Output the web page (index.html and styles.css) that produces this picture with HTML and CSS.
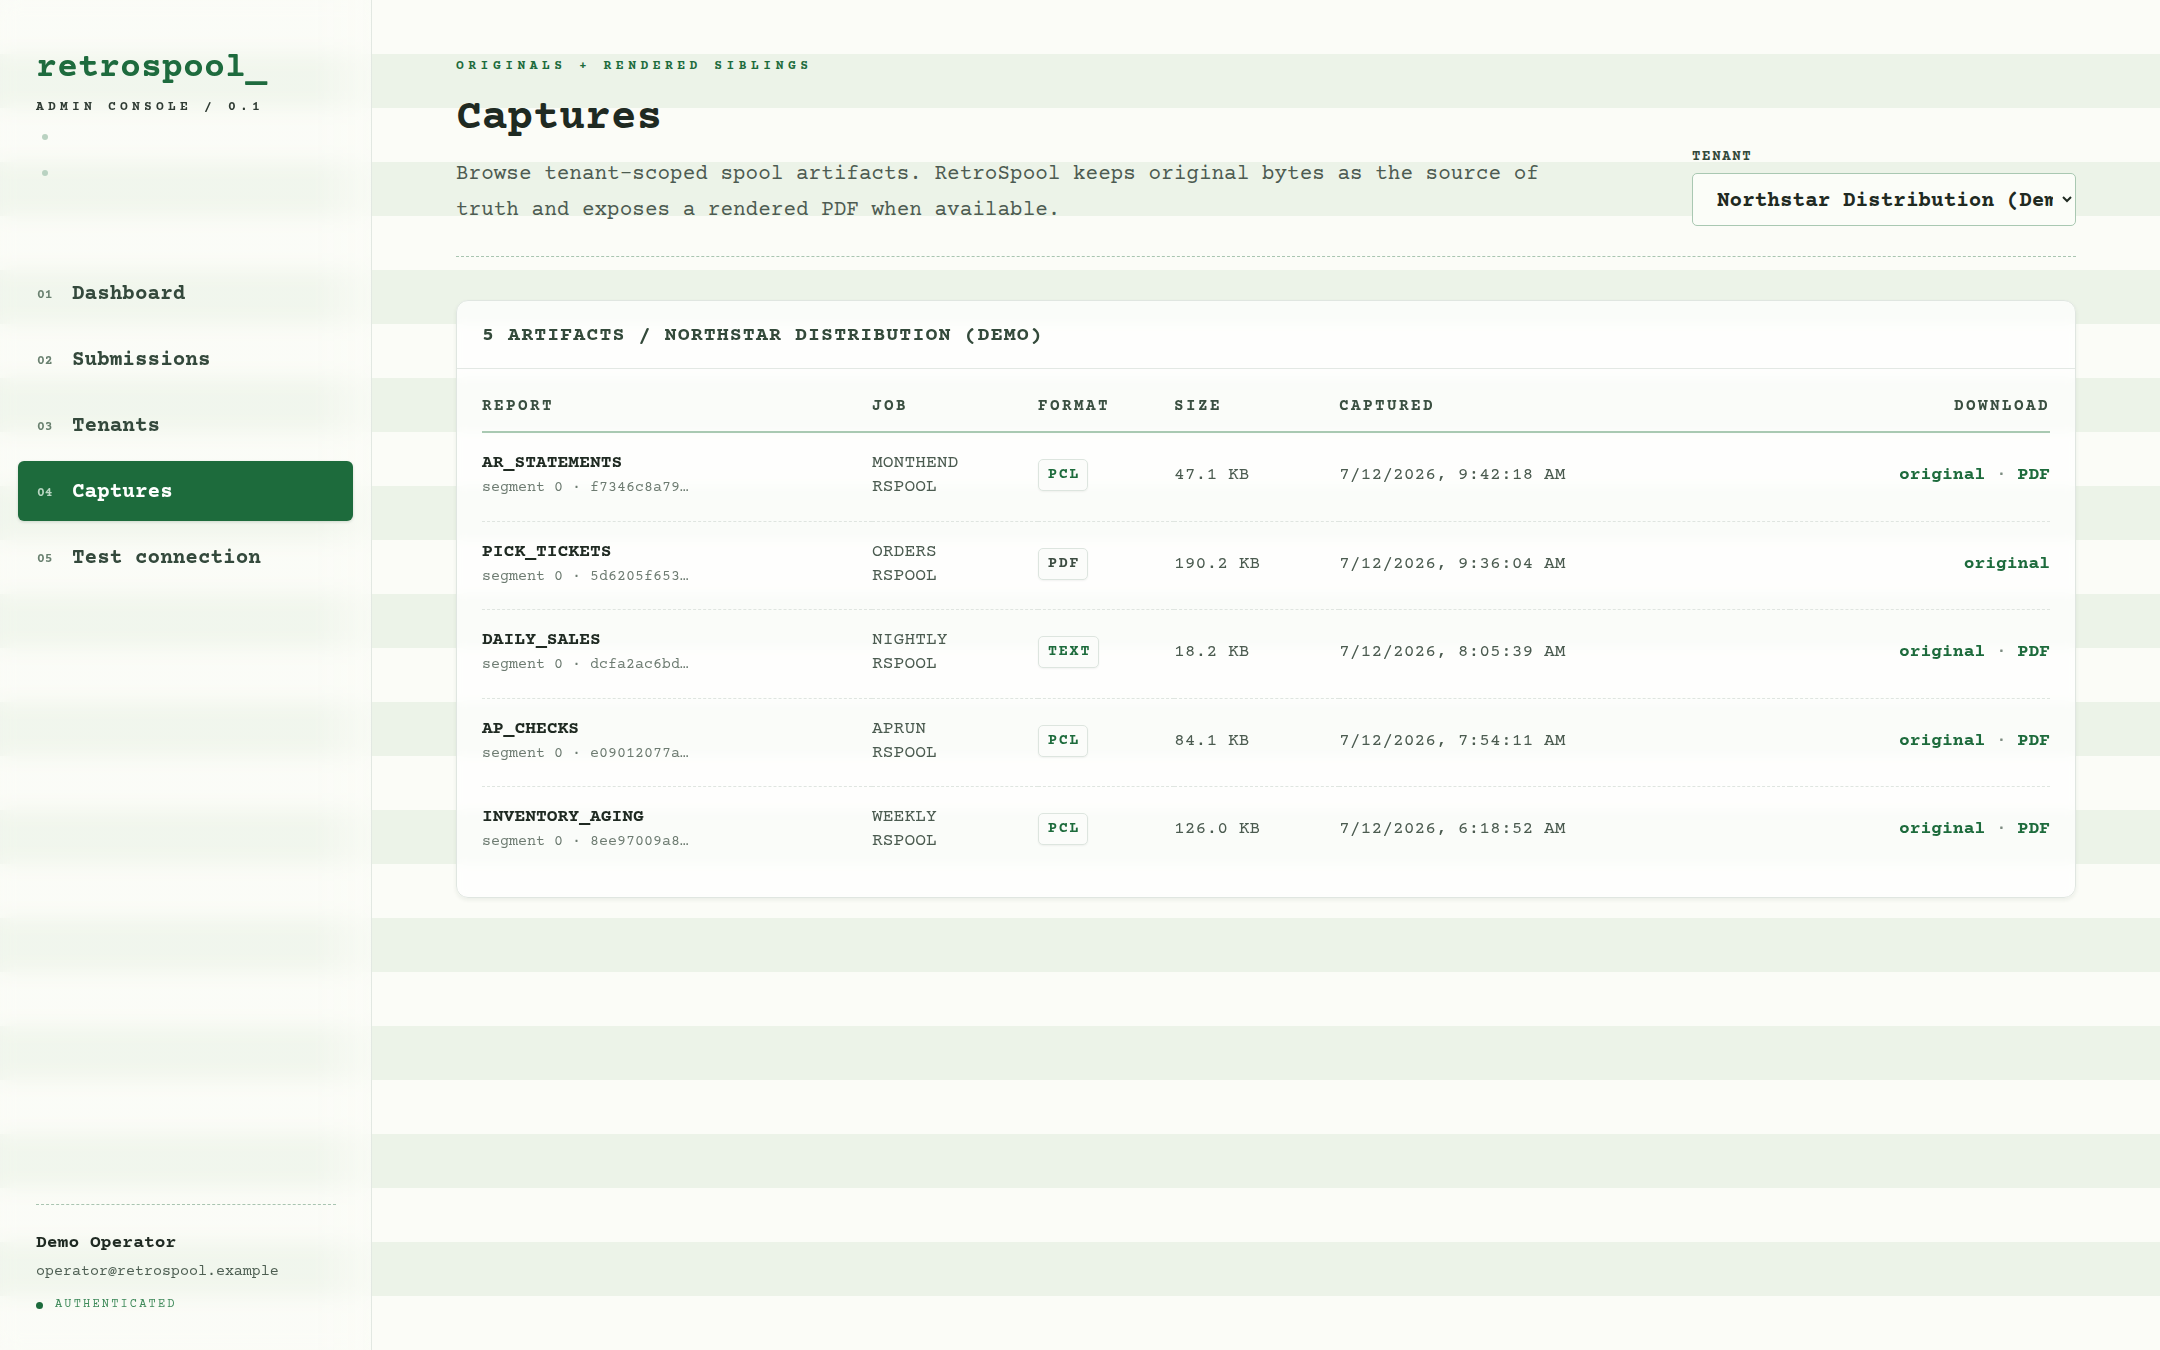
FILE: index.html
```html
<!DOCTYPE html>
<html lang="en">
<head>
  <meta charset="UTF-8">
  <meta name="viewport" content="width=device-width, initial-scale=1.0">
  <title>Captures · RetroSpool Admin</title>
  <link rel="stylesheet" href="styles.css">
</head>
<body>
  <div class="shell">
    <!-- Sidebar -->
    <aside class="sidebar">
      <div class="brand">
        <div class="logo">retrospool_</div>
        <div class="tagline">ADMIN CONSOLE / 0.1</div>
        <div class="blips"><span></span><span></span></div>
      </div>

      <nav class="nav">
        <a class="nav-item" href="#"><span class="nav-num">01</span><span class="nav-label">Dashboard</span></a>
        <a class="nav-item" href="#"><span class="nav-num">02</span><span class="nav-label">Submissions</span></a>
        <a class="nav-item" href="#"><span class="nav-num">03</span><span class="nav-label">Tenants</span></a>
        <a class="nav-item active" href="#"><span class="nav-num">04</span><span class="nav-label">Captures</span></a>
        <a class="nav-item" href="#"><span class="nav-num">05</span><span class="nav-label">Test connection</span></a>
      </nav>

      <div class="operator">
        <div class="operator-name">Demo Operator</div>
        <div class="operator-email">operator@retrospool.example</div>
        <div class="operator-status"><span class="status-dot"></span>AUTHENTICATED</div>
      </div>
    </aside>

    <!-- Main -->
    <main class="main">
      <header class="page-head">
        <div class="page-intro">
          <div class="eyebrow">ORIGINALS + RENDERED SIBLINGS</div>
          <h1>Captures</h1>
          <p>Browse tenant-scoped spool artifacts. RetroSpool keeps original bytes as the source of truth and exposes a rendered PDF when available.</p>
        </div>
        <label class="tenant-picker">
          <span class="field-label">TENANT</span>
          <select>
            <option>Northstar Distribution (Demo)</option>
            <option>Harbor Freight Lines</option>
          </select>
        </label>
      </header>

      <section class="card">
        <div class="card-head">5 ARTIFACTS / NORTHSTAR DISTRIBUTION (DEMO)</div>
        <div class="table-wrap">
          <table class="artifacts">
            <colgroup>
              <col class="col-report">
              <col class="col-job">
              <col class="col-format">
              <col class="col-size">
              <col>
              <col class="col-download">
            </colgroup>
            <thead>
              <tr>
                <th>REPORT</th>
                <th>JOB</th>
                <th>FORMAT</th>
                <th>SIZE</th>
                <th>CAPTURED</th>
                <th class="right">DOWNLOAD</th>
              </tr>
            </thead>
            <tbody>
              <tr>
                <td>
                  <div class="report-name">AR_STATEMENTS</div>
                  <div class="report-seg">segment 0 · f7346c8a79…</div>
                </td>
                <td class="job"><span>MONTHEND</span><span>RSPOOL</span></td>
                <td><span class="badge">PCL</span></td>
                <td>47.1 KB</td>
                <td>7/12/2026, 9:42:18 AM</td>
                <td class="right"><a href="#">original</a><span class="sep"> · </span><a href="#">PDF</a></td>
              </tr>
              <tr>
                <td>
                  <div class="report-name">PICK_TICKETS</div>
                  <div class="report-seg">segment 0 · 5d6205f653…</div>
                </td>
                <td class="job"><span>ORDERS</span><span>RSPOOL</span></td>
                <td><span class="badge plain">PDF</span></td>
                <td>190.2 KB</td>
                <td>7/12/2026, 9:36:04 AM</td>
                <td class="right"><a href="#">original</a></td>
              </tr>
              <tr>
                <td>
                  <div class="report-name">DAILY_SALES</div>
                  <div class="report-seg">segment 0 · dcfa2ac6bd…</div>
                </td>
                <td class="job"><span>NIGHTLY</span><span>RSPOOL</span></td>
                <td><span class="badge">TEXT</span></td>
                <td>18.2 KB</td>
                <td>7/12/2026, 8:05:39 AM</td>
                <td class="right"><a href="#">original</a><span class="sep"> · </span><a href="#">PDF</a></td>
              </tr>
              <tr>
                <td>
                  <div class="report-name">AP_CHECKS</div>
                  <div class="report-seg">segment 0 · e09012077a…</div>
                </td>
                <td class="job"><span>APRUN</span><span>RSPOOL</span></td>
                <td><span class="badge">PCL</span></td>
                <td>84.1 KB</td>
                <td>7/12/2026, 7:54:11 AM</td>
                <td class="right"><a href="#">original</a><span class="sep"> · </span><a href="#">PDF</a></td>
              </tr>
              <tr>
                <td>
                  <div class="report-name">INVENTORY_AGING</div>
                  <div class="report-seg">segment 0 · 8ee97009a8…</div>
                </td>
                <td class="job"><span>WEEKLY</span><span>RSPOOL</span></td>
                <td><span class="badge">PCL</span></td>
                <td>126.0 KB</td>
                <td>7/12/2026, 6:18:52 AM</td>
                <td class="right"><a href="#">original</a><span class="sep"> · </span><a href="#">PDF</a></td>
              </tr>
            </tbody>
          </table>
        </div>
      </section>
    </main>
  </div>
</body>
</html>
```

FILE: styles.css
```css
/* base */
* {
  box-sizing: border-box;
}

body {
  margin: 0;
  font-family: "Courier Prime", "Courier New", "Liberation Mono", monospace;
  color: #1f2a22;
  /* green-bar printer paper */
  background: repeating-linear-gradient(to bottom, #fbfcf7 0, #fbfcf7 54px, #ecf3e8 54px, #ecf3e8 108px);
  min-height: 100vh;
}

a {
  text-decoration: none;
  color: inherit;
}

.shell {
  display: flex;
  min-height: 100vh;
}

/* sidebar */
.sidebar {
  position: sticky;
  top: 0;
  width: 372px;
  flex: none;
  height: 100vh;
  display: flex;
  flex-direction: column;
  padding: 0 18px;
  border-right: 1px solid #e2e8e2;
  background: linear-gradient(to right, rgba(251, 252, 247, 0.35) 85%, rgba(251, 252, 247, 0.8));
  backdrop-filter: blur(10px);
}

.brand {
  padding: 50px 18px 0;
}

.logo {
  font-size: 35px;
  line-height: 38px;
  font-weight: 700;
  color: #1e6b3e;
}

.tagline {
  margin-top: 10px;
  font-size: 13px;
  line-height: 18px;
  font-weight: 700;
  letter-spacing: 4.2px;
  color: #2f3b33;
}

.blips {
  display: flex;
  flex-direction: column;
  gap: 30px;
  margin-top: 18px;
  padding-left: 6px;
}

.blips span {
  width: 6px;
  height: 6px;
  border-radius: 50%;
  background: #b9d2c1;
}

.nav {
  display: flex;
  flex-direction: column;
  gap: 6px;
  margin-top: 87px;
}

.nav-item {
  display: flex;
  align-items: center;
  height: 60px;
  padding: 3px 19px 0;
  border-radius: 6px;
  color: #34493c;
}

.nav-num {
  width: 35px;
  flex: none;
  font-size: 13px;
  font-weight: 700;
  color: #6a8170;
}

.nav-label {
  font-size: 21px;
  font-weight: 700;
}

.nav-item.active {
  background: #1d6b3c;
  color: #fff;
  box-shadow: 0 1px 3px rgba(20, 60, 35, 0.18);
}

.nav-item.active .nav-num {
  color: #b9d6c2;
}

.operator {
  margin: auto 17px 0 18px;
  padding: 26px 0 37px;
  border-top: 1px dashed #a9c4b1;
}

.operator-name {
  font-size: 18px;
  line-height: 24px;
  font-weight: 700;
  color: #1f2a22;
}

.operator-email {
  margin-top: 7px;
  font-size: 15px;
  line-height: 20px;
  color: #4d5e52;
}

.operator-status {
  display: flex;
  align-items: center;
  margin-top: 15px;
  font-size: 12px;
  line-height: 16px;
  letter-spacing: 0.18em;
  color: #3f8a5a;
}

.status-dot {
  width: 7px;
  height: 7px;
  margin-right: 12px;
  border-radius: 50%;
  background: #1d6b3c;
}

/* main */
.main {
  flex: 1;
  min-width: 0;
  padding: 57px 84px 40px;
}

.page-head {
  display: flex;
  justify-content: space-between;
  align-items: flex-end;
  padding-bottom: 27px;
  border-bottom: 1px dashed #a9c5b1;
}

.eyebrow {
  font-size: 13px;
  line-height: 18px;
  font-weight: 700;
  letter-spacing: 4.5px;
  color: #1d6b3c;
}

.page-intro h1 {
  margin: 20px 0 0;
  font-size: 43px;
  line-height: 48px;
  font-weight: 700;
  color: #1f2a22;
}

.page-intro p {
  max-width: 1110px;
  margin: 14px 0 0;
  font-size: 21px;
  line-height: 36px;
  color: #4d5b51;
}

.tenant-picker {
  display: flex;
  flex-direction: column;
  margin-bottom: 3px;
}

.field-label {
  padding-top: 3px;
  margin-bottom: 7px;
  font-size: 14px;
  line-height: 18px;
  font-weight: 700;
  letter-spacing: 0.12em;
  color: #33493a;
}

.tenant-picker select {
  width: 384px;
  height: 53px;
  padding: 3px 6px 0 20px;
  font-family: inherit;
  font-size: 21px;
  font-weight: 700;
  color: #1f2a22;
  background: #fbfdf8;
  border: 1px solid #a9c8b2;
  border-radius: 5px;
}

/* card */
.card {
  margin-top: 43px;
  background: rgba(255, 255, 255, 0.72);
  backdrop-filter: blur(6px);
  border: 1px solid #e0e6e1;
  border-radius: 12px;
  box-shadow: 0 2px 4px rgba(30, 50, 35, 0.07);
}

.card-head {
  display: flex;
  align-items: center;
  height: 68px;
  padding: 2px 25px 0;
  border-bottom: 1px solid #e3e8e4;
  font-size: 20px;
  font-weight: 700;
  letter-spacing: 1.05px;
  color: #344a3b;
}

.table-wrap {
  padding: 0 25px 22px;
}

.artifacts {
  width: 100%;
  border-collapse: collapse;
  table-layout: fixed;
}

.col-report { width: 390px; }
.col-job { width: 166px; }
.col-format { width: 136px; }
.col-size { width: 165px; }
.col-download { width: 260px; }

.artifacts th {
  padding: 27px 0 15px;
  font-size: 16px;
  line-height: 20px;
  font-weight: 700;
  letter-spacing: 0.15em;
  text-align: left;
  color: #3a4f41;
  border-bottom: 2px solid #a9c9b2;
}

.artifacts td {
  padding: 18px 0 21.5px;
  font-size: 18px;
  line-height: 24px;
  color: #4b5b50;
  vertical-align: middle;
  border-bottom: 1px dashed #dfe5e0;
}

.artifacts tbody tr:last-child td {
  border-bottom: none;
}

.artifacts .right {
  text-align: right;
}

.report-name {
  font-weight: 700;
  color: #1f2a22;
}

.report-seg {
  margin-top: 2px;
  font-size: 15px;
  line-height: 22px;
  color: #6d7b71;
}

.job span {
  display: block;
}

.badge {
  display: inline-block;
  padding: 5px 7px 5px 9px;
  font-size: 15px;
  line-height: 20px;
  font-weight: 700;
  letter-spacing: 0.12em;
  color: #1d6b3c;
  background: #fbfcfa;
  border: 1px solid #dde5df;
  border-radius: 5px;
  box-shadow: 0 1px 2px rgba(0, 0, 0, 0.05);
}

.badge.plain {
  color: #3d4d42;
}

.artifacts td a {
  font-weight: 700;
  color: #1d6b3c;
}

.sep {
  color: #7d8c81;
}
```
